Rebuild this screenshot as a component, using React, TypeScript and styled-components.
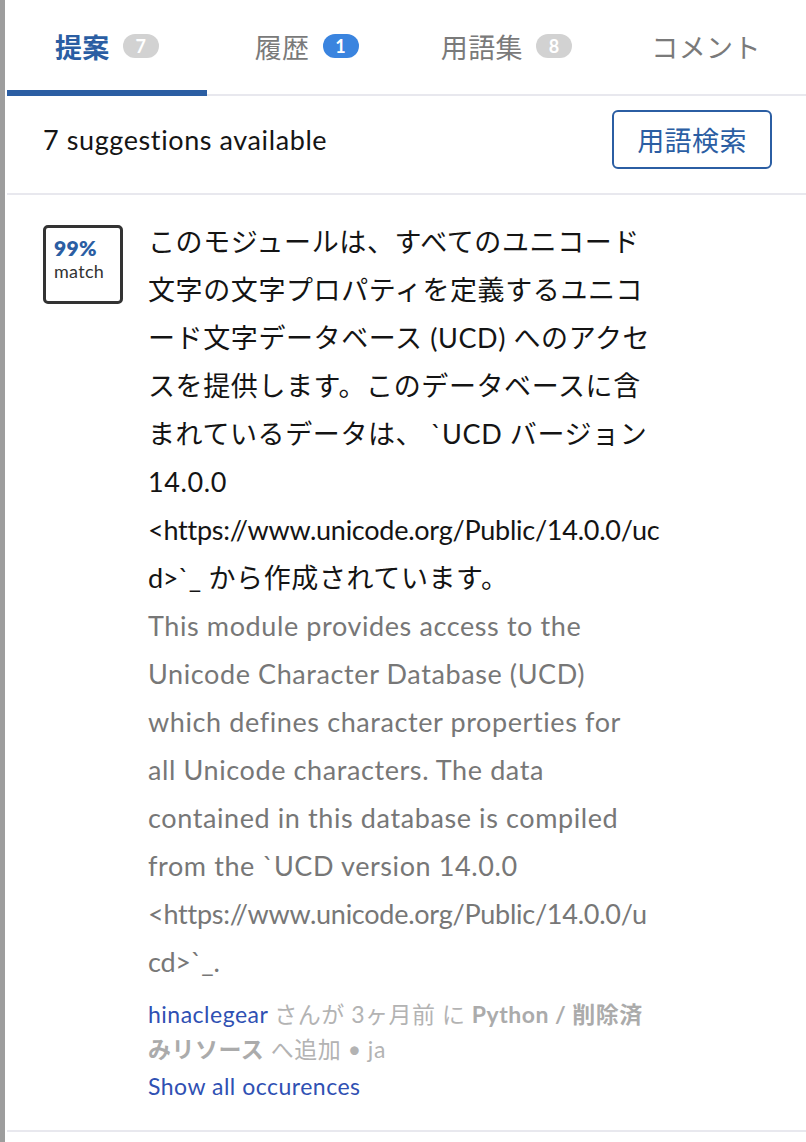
import React from "react";
import styled, { createGlobalStyle } from "styled-components";

const GlobalStyle = createGlobalStyle`
  html, body { margin: 0; padding: 0; background: #ffffff; }
  body {
    font-family: Lato, "Noto Sans CJK JP", sans-serif;
    -webkit-font-smoothing: antialiased;
  }
`;

const Page = styled.div`
  min-height: 1142px;
  border-left: 5px solid #9d9d9d;
  padding-left: 2px;
  box-sizing: border-box;
  background: #fff;
`;

const TabBar = styled.div`
  display: grid;
  grid-template-columns: repeat(4, 1fr);
  height: 94px;
  border-bottom: 2px solid #e8e8ee;
`;

const Tab = styled.div<{ $active?: boolean }>`
  position: relative;
  display: flex;
  align-items: center;
  justify-content: center;
  gap: 13px;
  padding-bottom: 2px;
  font-size: 27px;
  letter-spacing: 0.4px;
  font-weight: ${(p) => (p.$active ? 700 : 400)};
  color: ${(p) => (p.$active ? "#2b5ea3" : "#7a7a7a")};
  &::after {
    content: "";
    display: ${(p) => (p.$active ? "block" : "none")};
    position: absolute;
    left: 0;
    right: 0;
    bottom: -2px;
    height: 6px;
    background: #2b5ea3;
  }
`;

const Badge = styled.span<{ $blue?: boolean }>`
  display: inline-flex;
  align-items: center;
  justify-content: center;
  min-width: 36px;
  height: 24px;
  border-radius: 12px;
  background: ${(p) => (p.$blue ? "#3a84df" : "#d2d2d2")};
  color: #fff;
  font-size: 18px;
  font-weight: 700;
  letter-spacing: 0;
  line-height: 1;
`;

const Header = styled.div`
  display: flex;
  align-items: center;
  justify-content: space-between;
  padding: 14px 34px 24px 36px;
  border-bottom: 2px solid #e8e8ee;
`;

const Count = styled.div`
  font-size: 27px;
  letter-spacing: 0.6px;
  color: #151515;
`;

const Button = styled.button`
  width: 160px;
  height: 59px;
  border: 2px solid #2b5ea3;
  border-radius: 6px;
  background: #fff;
  color: #2b5ea3;
  font-family: inherit;
  font-size: 27px;
  letter-spacing: 0.4px;
  padding: 0;
`;

const Card = styled.div`
  display: flex;
  align-items: flex-start;
  gap: 25px;
  padding: 23px 36px 26px 36px;
  border-bottom: 2px solid #e8e8ee;
`;

const MatchBox = styled.div`
  flex: none;
  box-sizing: border-box;
  width: 80px;
  height: 79px;
  margin-top: 7px;
  border: 3px solid #333333;
  border-radius: 5px;
  padding: 8px 0 0 8px;
`;

const MatchPct = styled.div`
  font-size: 21px;
  font-weight: 800;
  color: #2b5ea3;
  line-height: 24px;
  letter-spacing: 0.3px;
`;

const MatchLabel = styled.div`
  font-size: 18px;
  color: #333;
  line-height: 23px;
  letter-spacing: 0.3px;
`;

const Body = styled.div`
  display: flex;
  flex-direction: column;
`;

const Text = styled.div<{ $muted?: boolean }>`
  font-size: 27px;
  line-height: 48px;
  letter-spacing: 0.6px;
  white-space: nowrap;
  color: ${(p) => (p.$muted ? "#777777" : "#141414")};
`;

const Url = styled.span`
  letter-spacing: -0.25px;
`;

const Meta = styled.div`
  margin-top: 11px;
  font-size: 23px;
  line-height: 35px;
  letter-spacing: 0.5px;
  color: #b3b3b3;
  white-space: nowrap;
`;

const Link = styled.a`
  color: #2f50b3;
  text-decoration: none;
`;

const Strong = styled.span`
  font-weight: 700;
  color: #ababab;
`;

const ShowAll = styled.div`
  margin-top: 2px;
  font-size: 23px;
  line-height: 35px;
  letter-spacing: 0.5px;
`;

export default function App() {
  return (
    <>
      <GlobalStyle />
      <Page>
        <TabBar>
          <Tab $active>
            提案 <Badge>7</Badge>
          </Tab>
          <Tab>
            履歴 <Badge $blue>1</Badge>
          </Tab>
          <Tab>
            用語集 <Badge>8</Badge>
          </Tab>
          <Tab>コメント</Tab>
        </TabBar>
        <Header>
          <Count>7 suggestions available</Count>
          <Button>用語検索</Button>
        </Header>
        <Card>
          <MatchBox>
            <MatchPct>99%</MatchPct>
            <MatchLabel>match</MatchLabel>
          </MatchBox>
          <Body>
            <Text>
              このモジュールは、すべてのユニコード
              <br />
              文字の文字プロパティを定義するユニコ
              <br />
              ード文字データベース (UCD) へのアクセ
              <br />
              スを提供します。このデータベースに含
              <br />
              まれているデータは、 `UCD バージョン
              <br />
              14.0.0
              <br />
              <Url>&lt;https://www.unicode.org/Public/14.0.0/uc</Url>
              <br />
              <Url>d&gt;`_</Url> から作成されています。
            </Text>
            <Text $muted>
              This module provides access to the
              <br />
              Unicode Character Database (UCD)
              <br />
              which defines character properties for
              <br />
              all Unicode characters. The data
              <br />
              contained in this database is compiled
              <br />
              from the `UCD version 14.0.0
              <br />
              <Url>&lt;https://www.unicode.org/Public/14.0.0/u</Url>
              <br />
              <Url>cd&gt;`_.</Url>
            </Text>
            <Meta>
              <Link href="#">hinaclegear</Link> さんが 3ヶ月前 に{" "}
              <Strong>Python / 削除済</Strong>
              <br />
              <Strong>みリソース</Strong> へ追加 • ja
            </Meta>
            <ShowAll>
              <Link href="#">Show all occurences</Link>
            </ShowAll>
          </Body>
        </Card>
      </Page>
    </>
  );
}
